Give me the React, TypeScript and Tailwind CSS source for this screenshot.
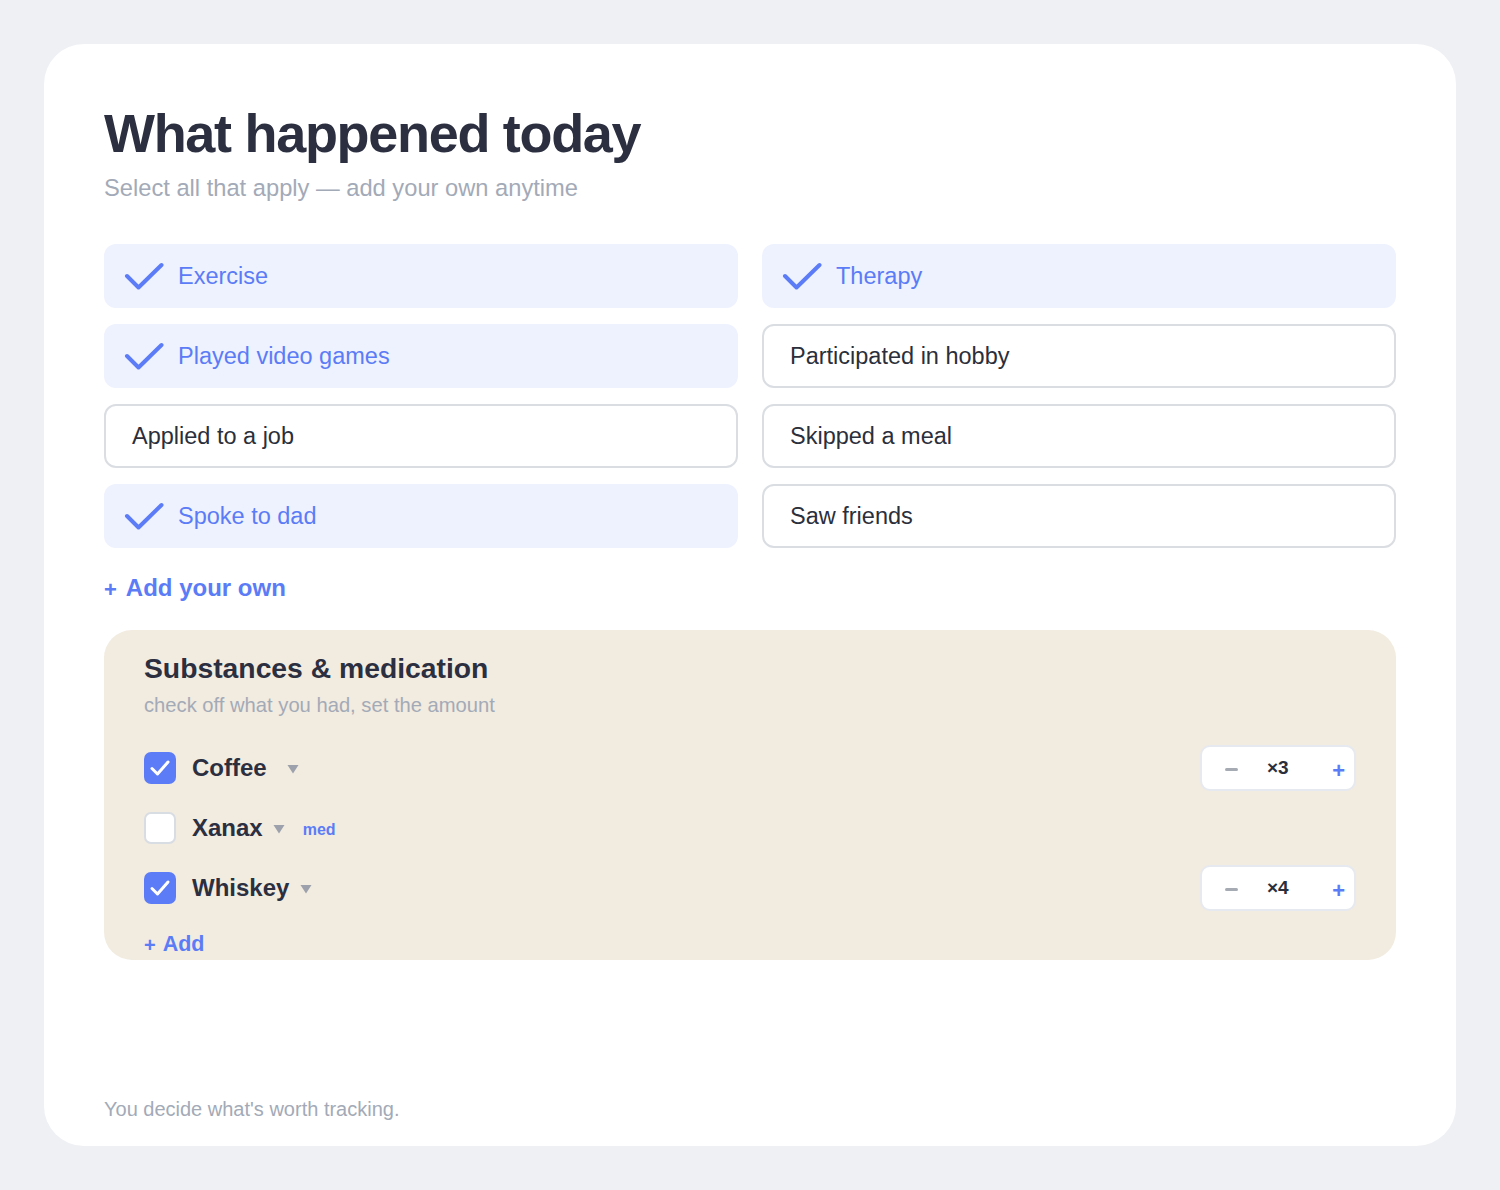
import { useState } from 'react'

type Activity = { label: string; done: boolean }

const ACTIVITIES: Activity[] = [
  { label: 'Exercise', done: true },
  { label: 'Therapy', done: true },
  { label: 'Played video games', done: true },
  { label: 'Participated in hobby', done: false },
  { label: 'Applied to a job', done: false },
  { label: 'Skipped a meal', done: false },
  { label: 'Spoke to dad', done: true },
  { label: 'Saw friends', done: false },
]

type Substance = { name: string; checked: boolean; amount?: number; med?: boolean; caretGap: string }

const SUBSTANCES: Substance[] = [
  { name: 'Coffee', checked: true, amount: 3, caretGap: 'ml-[20px]' },
  { name: 'Xanax', checked: false, med: true, caretGap: 'ml-[10px]' },
  { name: 'Whiskey', checked: true, amount: 4, caretGap: 'ml-[11px]' },
]

function Check() {
  return (
    <svg width="40" height="30" viewBox="0 0 40 30" fill="none" className="shrink-0">
      <path d="M3 15 L14.5 26.5 L37.5 4" stroke="#5b7cf6" strokeWidth="4" strokeLinecap="round" strokeLinejoin="round" />
    </svg>
  )
}

function Caret() {
  return (
    <svg width="12" height="10" viewBox="0 0 12 10" className="shrink-0">
      <path d="M0.5 1 H11.5 L6 9.5 Z" fill="#9ca1ab" />
    </svg>
  )
}

function ActivityTile({ item, onToggle }: { item: Activity; onToggle: () => void }) {
  if (item.done) {
    return (
      <button onClick={onToggle} className="h-16 flex items-center gap-[14px] pl-5 rounded-xl bg-[#eef2fe] text-[#5b7cf6] text-[23.5px] text-left">
        <Check />
        <span className="pt-[2px]">{item.label}</span>
      </button>
    )
  }
  return (
    <button onClick={onToggle} className="h-16 flex items-center pl-[26px] pt-[2px] rounded-xl border-2 border-[#dadde2] bg-white text-[#2b2f3b] text-[23.5px] text-left">
      {item.label}
    </button>
  )
}

function Stepper({ value }: { value: number }) {
  return (
    <div className="w-[156px] h-[46px] flex items-center pl-[23px] pr-[9px] rounded-[10px] border-2 border-[#e6e9ef] bg-white">
      <span className="w-[13px] h-[3px] bg-[#a6abb3] rounded-sm mt-[3px]" />
      <span className="ml-[29px] text-[19px] font-bold text-[#2b2f3b]">×{value}</span>
      <span className="ml-auto text-[22px] font-bold text-[#5b7cf6] leading-none mt-[5px]">+</span>
    </div>
  )
}

export default function App() {
  const [items, setItems] = useState(ACTIVITIES)

  const toggle = (i: number) =>
    setItems((prev) => prev.map((it, idx) => (idx === i ? { ...it, done: !it.done } : it)))

  return (
    <div className="min-h-screen w-full bg-[#eff0f4] p-[44px]" style={{ fontFamily: '"Liberation Sans", Arial, sans-serif' }}>
      <div className="h-[1102px] bg-white rounded-[40px] flex flex-col px-[60px] pt-[59px] pb-[23px]">
        <h1 className="text-[54px] leading-[60px] font-bold text-[#2b2f40] tracking-[-1.3px]">What happened today</h1>
        <p className="mt-[9px] text-[23.7px] leading-8 text-[#a3aab7]">Select all that apply — add your own anytime</p>

        <div className="mt-10 grid grid-cols-2 gap-x-6 gap-y-4">
          {items.map((it, i) => (
            <ActivityTile key={it.label} item={it} onToggle={() => toggle(i)} />
          ))}
        </div>

        <div className="mt-6 h-8 flex items-center text-[#5b7cf6] font-bold">
          <span className="text-[22px] mr-[9px] mt-[2px]">+</span>
          <span className="text-[24px]">Add your own</span>
        </div>

        {/* substances */}
        <div className="mt-[26px] h-[330px] overflow-hidden rounded-[28px] bg-[#f2ebe0] px-10 pt-5">
          <h2 className="text-[28.3px] leading-9 font-bold text-[#2b2f40]">Substances &amp; medication</h2>
          <p className="mt-[5px] text-[20.2px] leading-7 text-[#a3aab7]">check off what you had, set the amount</p>

          <div className="mt-[19px] flex flex-col">
            {SUBSTANCES.map((s) => (
              <div key={s.name} className="h-[60px] flex items-center">
                {s.checked ? (
                  <span className="w-8 h-8 rounded-[7px] bg-[#5b7cf6] flex items-center justify-center shrink-0">
                    <svg width="22" height="18" viewBox="0 0 22 18" fill="none">
                      <path d="M3 9.5 L8.5 15 L19 3" stroke="white" strokeWidth="3" strokeLinecap="round" strokeLinejoin="round" />
                    </svg>
                  </span>
                ) : (
                  <span className="w-8 h-8 rounded-[7px] bg-white border-2 border-[#d8dce3] shrink-0" />
                )}
                <span className="ml-4 text-[24px] font-bold text-[#2b2f40]">{s.name}</span>
                <span className={s.caretGap + ' mt-[2px]'}>
                  <Caret />
                </span>
                {s.med && <span className="ml-[18px] text-[16px] font-bold text-[#5b7cf6] mt-[3px]">med</span>}
                <div className="flex-1" />
                {s.amount !== undefined && <Stepper value={s.amount} />}
              </div>
            ))}
          </div>

          <div className="mt-3 h-7 flex items-center text-[#5b7cf6] font-bold">
            <span className="text-[20px] mr-[7px] mt-[2px]">+</span>
            <span className="text-[21.5px]">Add</span>
          </div>
        </div>

        <p className="mt-auto text-[20px] leading-7 text-[#a3aab7]">You decide what's worth tracking.</p>
      </div>
    </div>
  )
}
